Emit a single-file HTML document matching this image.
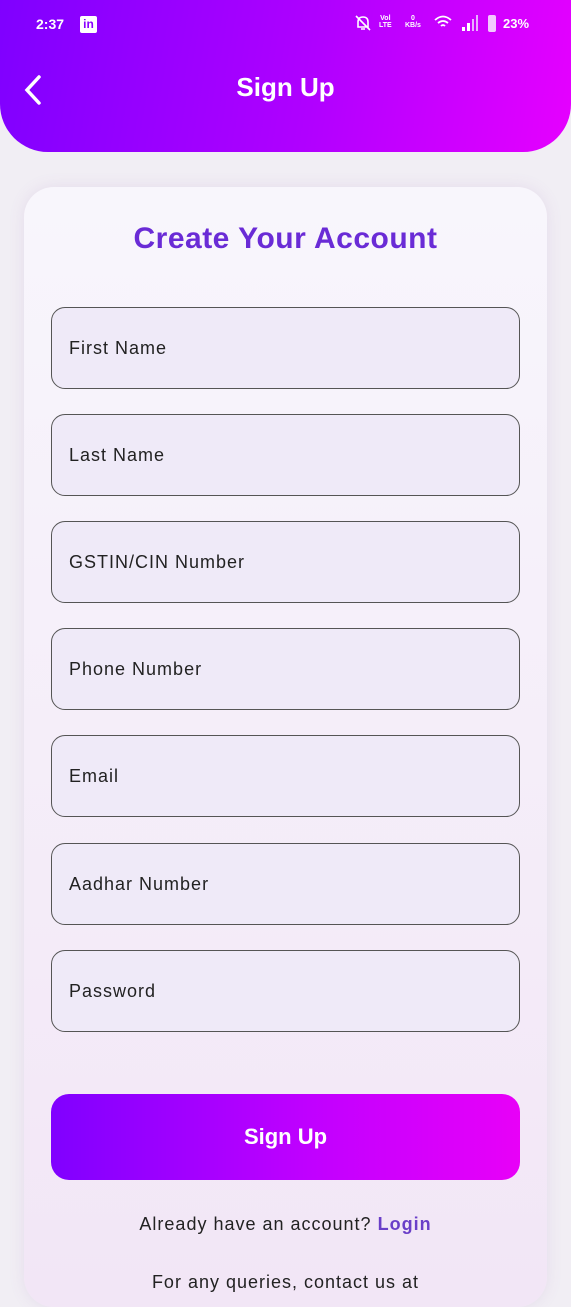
<!DOCTYPE html>
<html><head><style>
*{margin:0;padding:0;box-sizing:border-box}
body{width:571px;height:1280px;overflow:hidden;background:#f1eef4;font-family:"Liberation Sans",sans-serif;position:relative}
.hdr{position:absolute;left:0;top:0;width:571px;height:152px;background:linear-gradient(100deg,#7f00ff,#b000ff 55%,#e600ff);border-radius:0 0 48px 48px}
.sb{position:absolute;top:16px;color:#fff;font-size:14px;font-weight:bold}
.title{position:absolute;top:72px;width:100%;text-align:center;color:#fff;font-size:26px;font-weight:bold}
.card{position:absolute;left:24px;top:187px;width:523px;height:1120px;background:linear-gradient(#f8f6fc,#f2e6f6);border-radius:30px;box-shadow:0 0 16px rgba(150,100,180,.12)}
h1{position:absolute;top:222px;width:100%;text-align:center;color:#6a2bd6;font-size:30px;font-weight:bold;letter-spacing:.5px}
.in{position:absolute;left:51px;width:469px;height:82px;border:1.3px solid #555;border-radius:14px;background:#efeaf8;padding-left:17px;line-height:80px;font-size:18px;color:#222;letter-spacing:1px}
.btn{position:absolute;left:51px;top:1094px;width:469px;height:86px;border-radius:18px;background:linear-gradient(90deg,#8000ff,#c000ff 55%,#e800f8);color:#fff;font-size:22px;font-weight:bold;text-align:center;line-height:86px}
.al{position:absolute;top:1214px;width:100%;text-align:center;font-size:18px;color:#222;letter-spacing:1px}
.al b{color:#6a3fc8}
.t{position:absolute;color:#fff;font-size:7px;font-weight:bold;line-height:7px;text-align:center}
</style></head><body>
<div class="hdr">
<div class="sb" style="left:36px">2:37</div>
<div style="position:absolute;left:80px;top:16px;width:17px;height:17px;background:#fff;border-radius:2px;color:#8a00ff;font-size:12px;font-weight:bold;text-align:center;line-height:17px">in</div>
<svg style="position:absolute;left:354px;top:14px" width="18" height="18"><path d="M4 13 L4 8 Q4 3 9 3 Q14 3 14 8 L14 13 Z M7 15 L11 15 M2 2 L16 16" stroke="#fff" stroke-width="1.6" fill="none"/></svg>
<div class="t" style="left:379px;top:15px">Vol<br>LTE</div>
<div class="t" style="left:405px;top:15px">0<br>KB/s</div>
<svg style="position:absolute;left:433px;top:14px" width="20" height="16"><path d="M2 6 Q10 -1 18 6 M5 9 Q10 5 15 9 M8 12 Q10 10 12 12" stroke="#fff" stroke-width="1.8" fill="none"/></svg>
<svg style="position:absolute;left:461px;top:14px" width="20" height="18"><rect x="1" y="13" width="3" height="4" fill="#fff"/><rect x="6" y="9" width="3" height="8" fill="#fff"/><rect x="11" y="5" width="2" height="12" fill="#e8b0ff"/><rect x="15" y="1" width="2" height="16" fill="#e8b0ff"/></svg>
<div class="sb" style="left:503px;font-size:13px">23%</div>
<div style="position:absolute;left:488px;top:15px;width:8px;height:17px;background:#f3c8ff;border-radius:2px"></div>
<svg style="position:absolute;left:22px;top:74px" width="22" height="32"><path d="M17 3 L5 16 L17 29" stroke="#fff" stroke-width="3.5" fill="none" stroke-linecap="round"/></svg>
<div class="title">Sign Up</div>
</div>
<div class="card"></div>
<h1>Create Your Account</h1>
<div class="in" style="top:307px">First Name</div>
<div class="in" style="top:414px">Last Name</div>
<div class="in" style="top:521px">GSTIN/CIN Number</div>
<div class="in" style="top:628px">Phone Number</div>
<div class="in" style="top:735px">Email</div>
<div class="in" style="top:843px">Aadhar Number</div>
<div class="in" style="top:950px">Password</div>
<div class="btn">Sign Up</div>
<div class="al">Already have an account? <b>Login</b></div>
<div class="al" style="top:1272px">For any queries, contact us at</div>
</body></html>
